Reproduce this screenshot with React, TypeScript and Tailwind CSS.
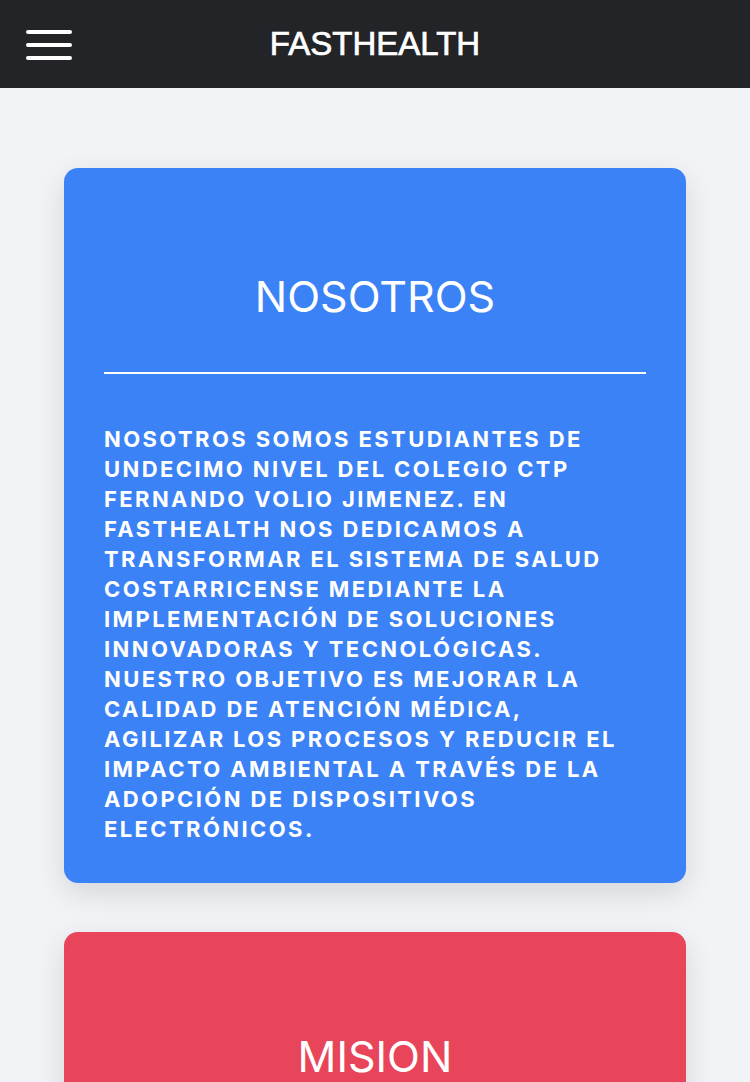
import React from "react";

export default function App() {
  return (
    <div className="min-h-[1082px] bg-[#f2f3f7]" style={{ fontFamily: "Inter, 'Noto Sans', sans-serif" }}>
      <header className="relative flex h-[88px] items-center justify-center bg-[#232428]">
        <div className="absolute left-[26px] top-[30px] flex w-[46px] flex-col gap-[9px]">
          <span className="block h-[4px] rounded-full bg-white" />
          <span className="block h-[4px] rounded-full bg-white" />
          <span className="block h-[4px] rounded-full bg-white" />
        </div>
        <h1
          className="text-[33px] font-normal text-white [-webkit-text-stroke:0.7px_white]"
          style={{ fontFamily: "'Liberation Sans', Arial, sans-serif" }}
        >
          FASTHEALTH
        </h1>
      </header>
      <main className="flex flex-col gap-[49px] px-[64px] pt-[80px]">
        <section className="rounded-[14px] bg-[#3b82f6] px-[40px] pb-[39px] pt-[100px] shadow-[0_10px_30px_rgba(0,0,0,0.12)]">
          <h2 className="text-center text-[43px] font-normal leading-[56px] text-white">NOSOTROS</h2>
          <div className="mt-[48px] h-[2px] bg-white" />
          <p className="mt-[50px] text-[22px] font-bold uppercase leading-[30px] tracking-[2.4px] text-white">
            Nosotros somos estudiantes de undecimo nivel del colegio CTP Fernando Volio Jimenez. En FastHealth nos dedicamos a transformar el sistema de salud costarricense mediante la implementación de soluciones innovadoras y tecnológicas. Nuestro objetivo es mejorar la calidad de atención médica, agilizar los procesos y reducir el impacto ambiental a través de la adopción de dispositivos electrónicos.
          </p>
        </section>
        <section className="rounded-[14px] bg-[#e9455a] px-[40px] pb-[39px] pt-[96px] shadow-[0_10px_30px_rgba(0,0,0,0.12)]">
          <h2 className="text-center text-[43px] font-normal leading-[56px] text-white">MISION</h2>
          <div className="mt-[48px] h-[2px] bg-white" />
          <p className="mt-[50px] text-[22px] font-bold uppercase leading-[30px] tracking-[2.4px] text-white">
            Nuestra misión
          </p>
        </section>
      </main>
    </div>
  );
}
